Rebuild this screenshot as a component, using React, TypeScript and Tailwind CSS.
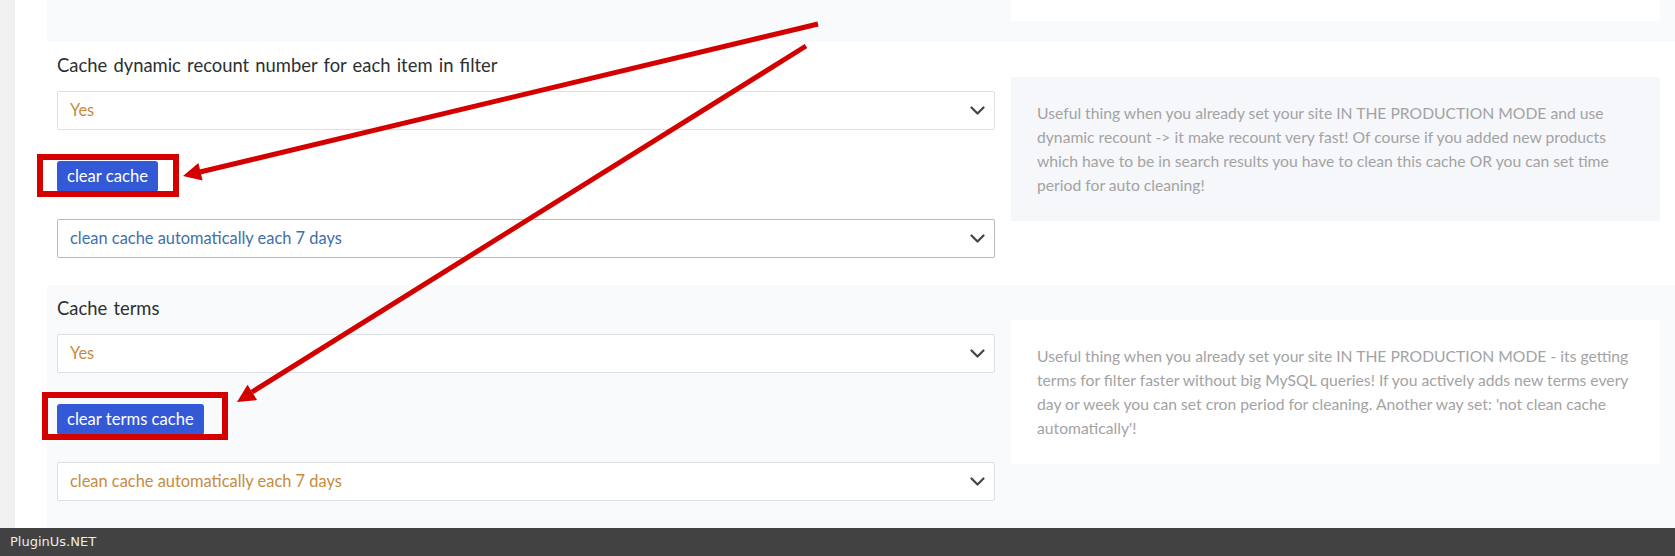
const font = { fontFamily: "Lato, 'Open Sans', sans-serif" };

function Chevron() {
  return (
    <svg width="15" height="9" viewBox="0 0 15 9" fill="none">
      <polyline points="1.5,1.5 7.5,7.5 13.5,1.5" stroke="#444" strokeWidth="2.2" strokeLinecap="round" strokeLinejoin="round" />
    </svg>
  );
}

function Select({ value, tone, dark }: { value: string; tone: "orange" | "blue"; dark?: boolean }) {
  return (
    <div
      className={
        "h-[39px] w-[938px] bg-white border rounded-[2px] flex items-center justify-between pl-[12px] pr-[9px] text-[16.4px] " +
        (dark ? "border-[#b9b9bd] " : "border-[#dedfe2] ") +
        (tone === "orange" ? "text-[#c68b3c]" : "text-[#3e6fab]")
      }
    >
      <span>{value}</span>
      <Chevron />
    </div>
  );
}

function Setting({
  label,
  button,
  first,
  second,
  info,
  light,
  boxBg,
}: {
  label: string;
  button: string;
  first: { value: string; tone: "orange" | "blue"; dark?: boolean };
  second: { value: string; tone: "orange" | "blue"; dark?: boolean };
  info: string;
  light?: boolean;
  boxBg: string;
}) {
  return (
    <div className={"flex gap-[16px] pl-[10px] pr-[15px] pt-[11px] pb-[27px] " + (light ? "bg-[#f9fafc]" : "bg-white")}>
      <div className="flex flex-col w-[938px]">
        <div className="text-[18.4px] leading-[24px] text-[#2c2f33] [word-spacing:1.5px]">{label}</div>
        <div className="mt-[14px]">
          <Select {...first} />
        </div>
        <div className="mt-[31px]">
          <button className="h-[31px] px-[10px] bg-[#3459d6] text-white text-[16.6px] rounded-[3px]">{button}</button>
        </div>
        <div className="mt-[27px]">
          <Select {...second} />
        </div>
      </div>
      <div className="w-[649px] pt-[24px]">
        <div className={"px-[26px] py-6 text-[15.7px] leading-6 text-[#a3a3a3] " + boxBg}>{info}</div>
      </div>
    </div>
  );
}

export default function App() {
  return (
    <div className="relative w-[1675px] h-[556px] overflow-hidden bg-white" style={font}>
      <div className="flex h-[528px]">
        <div className="w-[15px] bg-[#f0f0f1]" />
        <div className="w-[32px] bg-white" />
        <div className="flex-1 flex flex-col">
          {/* tail of previous setting */}
          <div className="h-[43px] bg-[#f9fafc] flex justify-end pr-[15px]">
            <div className="w-[649px] h-[21px] bg-white" />
          </div>

          <Setting
            label="Cache dynamic recount number for each item in filter"
            button="clear cache"
            first={{ value: "Yes", tone: "orange" }}
            second={{ value: "clean cache automatically each 7 days", tone: "blue", dark: true }}
            info="Useful thing when you already set your site IN THE PRODUCTION MODE and use dynamic recount -> it make recount very fast! Of course if you added new products which have to be in search results you have to clean this cache OR you can set time period for auto cleaning!"
            boxBg="bg-[#f6f7fa]"
          />

          <Setting
            light
            label="Cache terms"
            button="clear terms cache"
            first={{ value: "Yes", tone: "orange" }}
            second={{ value: "clean cache automatically each 7 days", tone: "orange" }}
            info="Useful thing when you already set your site IN THE PRODUCTION MODE - its getting terms for filter faster without big MySQL queries! If you actively adds new terms every day or week you can set cron period for cleaning. Another way set: 'not clean cache automatically'!"
            boxBg="bg-white"
          />
        </div>
      </div>

      {/* footer */}
      <div className="h-[28px] bg-[#424242] flex items-center pl-[10px] text-[13px] text-[#ececec]" style={{ fontFamily: "'DejaVu Sans', sans-serif" }}>
        PluginUs.NET
      </div>

      {/* red annotations drawn over the screenshot */}
      <svg className="absolute left-0 top-0 pointer-events-none" width="1675" height="556">
        <rect x="40" y="157" width="136" height="37" fill="none" stroke="#d40000" strokeWidth="6" />
        <rect x="45" y="395" width="180" height="42" fill="none" stroke="#d40000" strokeWidth="6" />
        <line x1="818" y1="24" x2="200" y2="172" stroke="#d40000" strokeWidth="5" />
        <polygon points="183,176 198.4,163 202.6,180.6" fill="#d40000" />
        <line x1="806" y1="46" x2="252" y2="392" stroke="#d40000" strokeWidth="5" />
        <polygon points="237,402 247.5,384.8 257.1,400.1" fill="#d40000" />
      </svg>
    </div>
  );
}
